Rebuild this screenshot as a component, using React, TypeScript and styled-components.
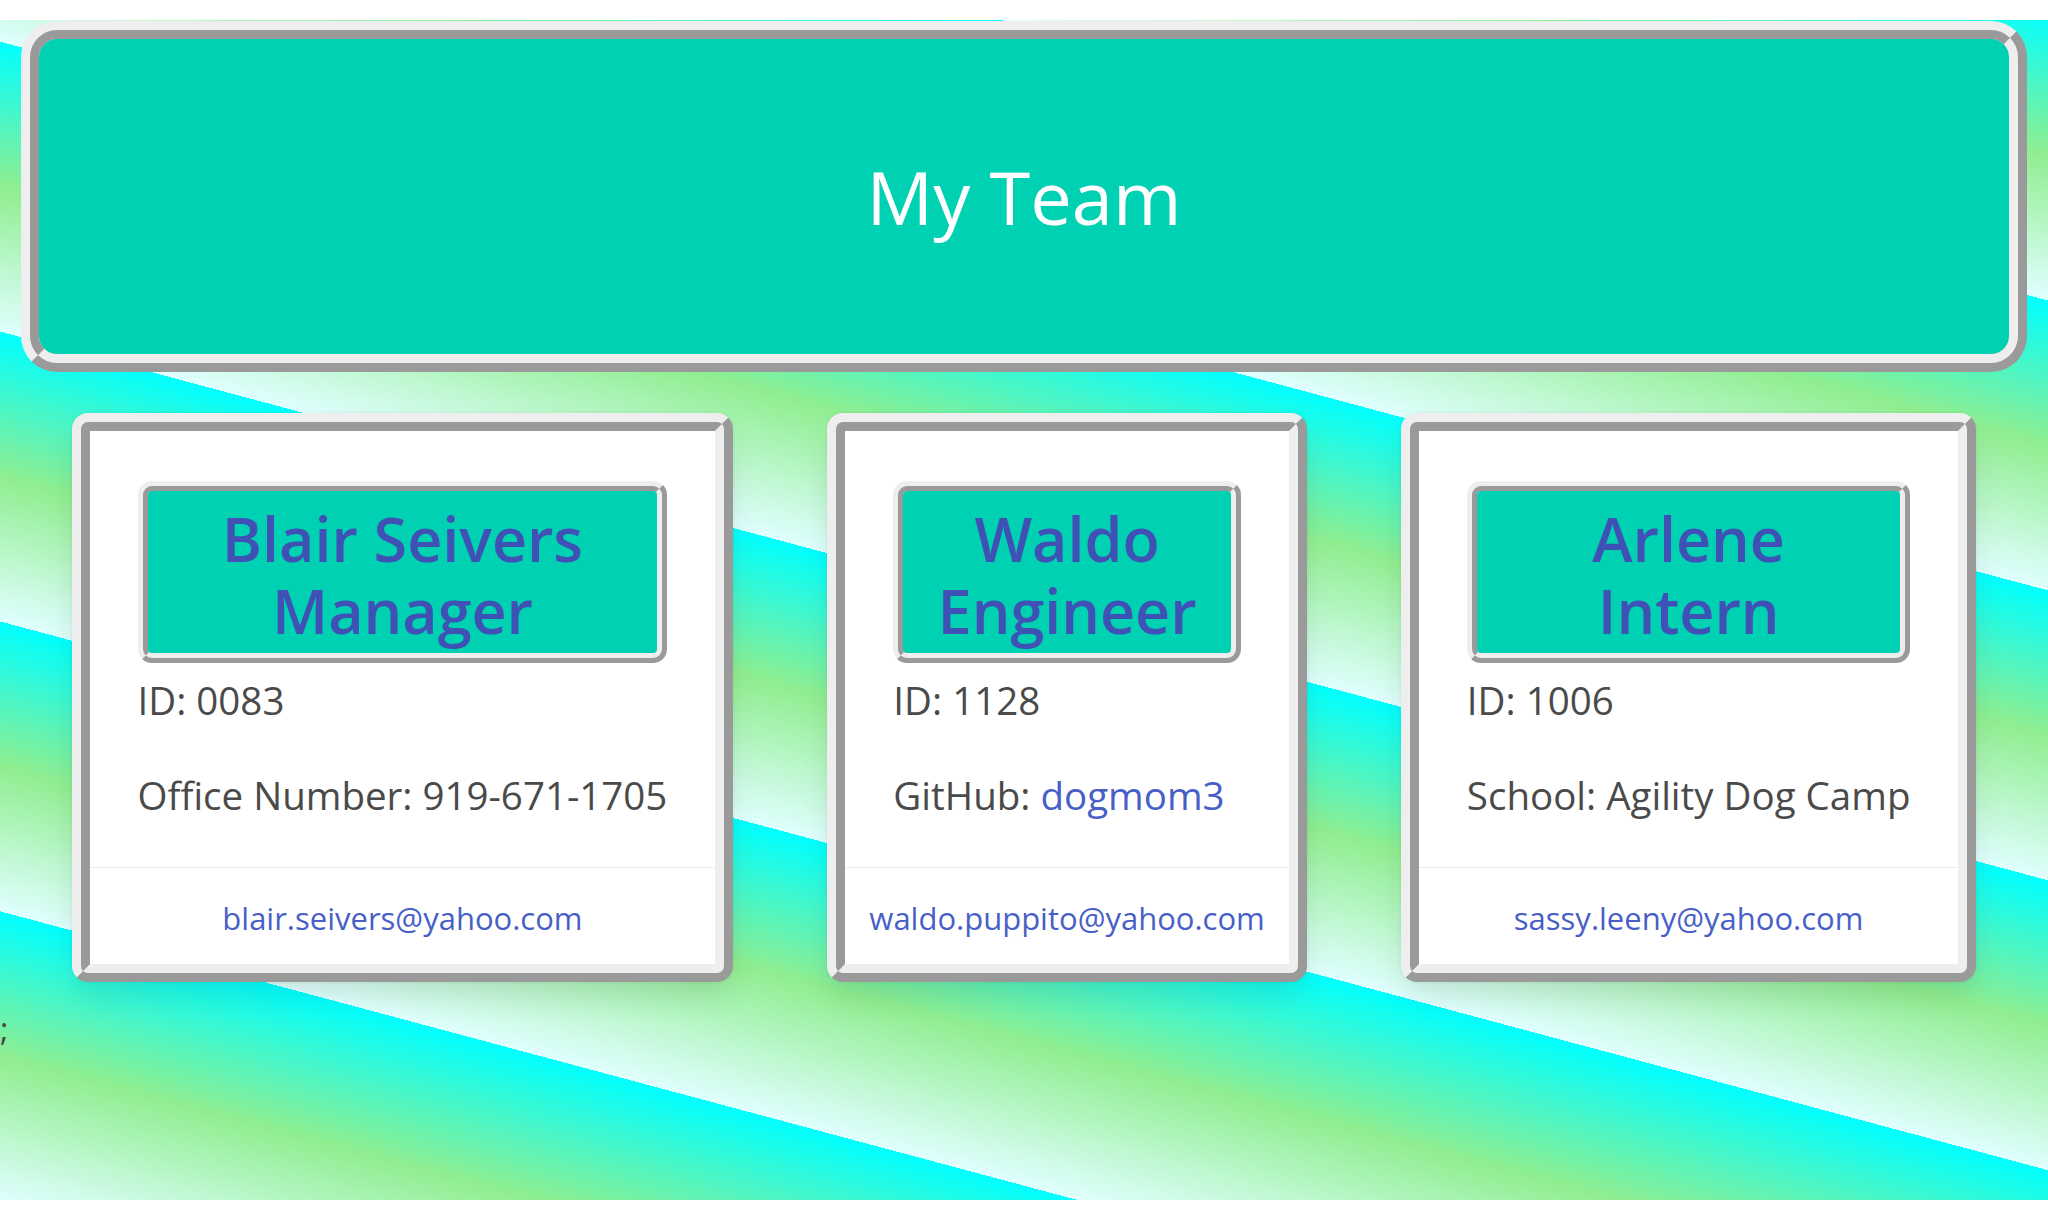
import React from 'react';
import styled, { createGlobalStyle } from 'styled-components';

const GlobalStyle = createGlobalStyle`
  html, body {
    margin: 0;
    padding: 0;
    background: #ffffff;
  }
  body {
    font-family: "Open Sans", "Noto Sans", sans-serif;
    color: #4a4a4a;
  }
`;

const Page = styled.div`
  margin-top: 20px;
  height: 1180px;
  padding-top: 1px;
  box-sizing: border-box;
  overflow: hidden;
  background: repeating-linear-gradient(195deg, #00ffff -9px, #90ee90 131px, #e0ffff 271px);
`;

const Hero = styled.header`
  margin: 0 21px;
  height: 351px;
  box-sizing: border-box;
  border: 18px ridge #eeeeee;
  border-radius: 36px;
  background: #00d1b2;
  display: flex;
  align-items: center;
  justify-content: center;
`;

const HeroTitle = styled.h1`
  margin: 0;
  font-size: 74px;
  font-weight: 400;
  line-height: 1.125;
  color: #ffffff;
`;

const CardRow = styled.section`
  display: flex;
  justify-content: center;
  align-items: stretch;
  gap: 94px;
  margin-top: 41px;
`;

const Card = styled.article`
  display: flex;
  flex-direction: column;
  background: #ffffff;
  border: 18px ridge #eeeeee;
  border-radius: 16px;
  box-shadow: 0 16px 32px -4px rgba(10, 10, 10, 0.1), 0 0 0 2px rgba(10, 10, 10, 0.02);
`;

const CardContent = styled.div`
  flex: 1;
  padding: 50px 48px 42px;
`;

const RoleBox = styled.div`
  border: 10px ridge #eeeeee;
  border-radius: 14px;
  background: #00d1b2;
  padding: 12px 20px 6px;
  text-align: center;
`;

const Name = styled.h2`
  margin: 0;
  font-size: 61px;
  font-weight: 600;
  line-height: 72px;
  color: #3f51b5;

  span {
    display: block;
  }
`;

const Detail = styled.p`
  margin: 35px 0 0;
  font-size: 38.5px;
  line-height: 60px;
  white-space: nowrap;

  &:first-of-type {
    margin-top: 7px;
  }
`;

const Link = styled.a`
  color: #485fc7;
  text-decoration: none;
`;

const CardFooter = styled.footer`
  display: flex;
  border-top: 1px solid #ededed;
`;

const FooterItem = styled.a`
  flex: 1;
  display: flex;
  justify-content: center;
  padding: 26px 24px 22px;
  font-size: 31px;
  line-height: 48px;
  color: #485fc7;
  text-decoration: none;
  white-space: nowrap;
`;

const Stray = styled.div`
  margin-top: 23px;
  font-size: 32px;
  line-height: 48px;
`;

type Member = {
  name: string;
  role: string;
  id: string;
  label: string;
  value: string;
  isLink?: boolean;
  email: string;
};

const team: Member[] = [
  { name: 'Blair Seivers', role: 'Manager', id: '0083', label: 'Office Number', value: '919-671-1705', email: 'blair.seivers@yahoo.com' },
  { name: 'Waldo', role: 'Engineer', id: '1128', label: 'GitHub', value: 'dogmom3', isLink: true, email: 'waldo.puppito@yahoo.com' },
  { name: 'Arlene', role: 'Intern', id: '1006', label: 'School', value: 'Agility Dog Camp', email: 'sassy.leeny@yahoo.com' },
];

const App: React.FC = () => {
  return (
    <>
      <GlobalStyle />
      <Page>
        <Hero>
          <HeroTitle>My Team</HeroTitle>
        </Hero>

        <CardRow>
          {team.map((m) => (
            <Card key={m.id}>
              <CardContent>
                <RoleBox>
                  <Name>
                    <span>{m.name}</span>
                    <span>{m.role}</span>
                  </Name>
                </RoleBox>
                <Detail>ID: {m.id}</Detail>
                <Detail>
                  {m.label}:{' '}
                  {m.isLink ? <Link href="#">{m.value}</Link> : m.value}
                </Detail>
              </CardContent>
              <CardFooter>
                <FooterItem href="#">{m.email}</FooterItem>
              </CardFooter>
            </Card>
          ))}
        </CardRow>

        <Stray>;</Stray>
      </Page>
    </>
  );
};

export default App;
